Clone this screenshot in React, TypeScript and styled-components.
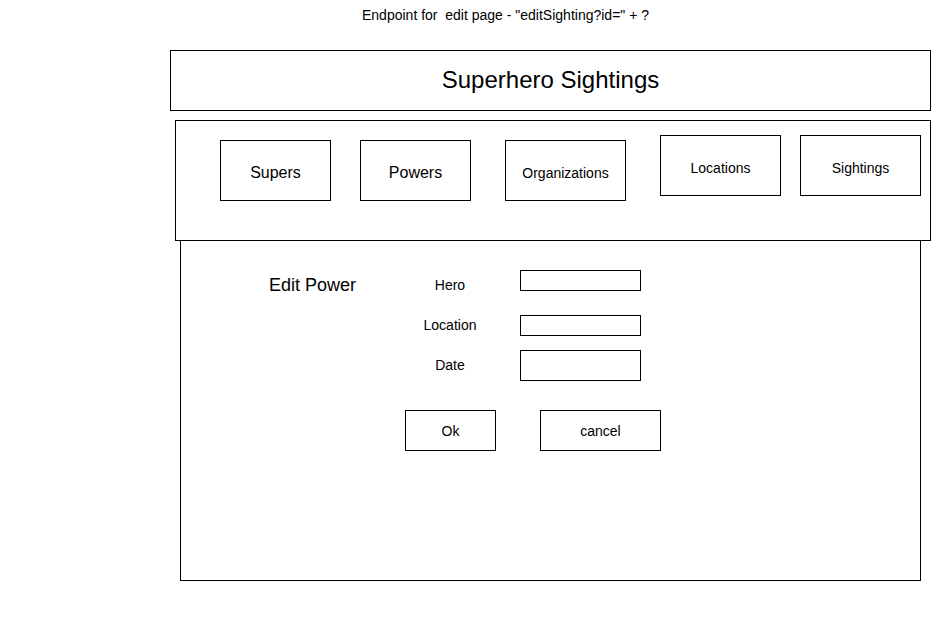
import React from "react";
import styled, { createGlobalStyle } from "styled-components";

const GlobalStyle = createGlobalStyle`
  html, body {
    margin: 0;
    padding: 0;
    background: #ffffff;
  }
  body {
    font-family: "Liberation Sans", Arial, Helvetica, sans-serif;
    color: #000000;
  }
  * { box-sizing: border-box; }
`;

const Canvas = styled.div`
  width: 931px;
  height: 623px;
  display: flex;
  flex-direction: column;
  align-items: flex-start;
  overflow: hidden;
  background: #ffffff;
`;

const Caption = styled.div`
  margin: 7px 0 0 362px;
  font-size: 14px;
  line-height: 16px;
  white-space: pre;
`;

const HeaderBox = styled.header`
  margin: 27px 0 0 170px;
  width: 761px;
  height: 61px;
  border: 1px solid #000;
  display: flex;
  align-items: center;
  justify-content: center;
  font-size: 24px;
  line-height: 28px;
  padding-bottom: 1px;
`;

const NavBar = styled.nav`
  margin: 9px 0 0 175px;
  width: 756px;
  height: 121px;
  border: 1px solid #000;
  display: flex;
  align-items: flex-start;
  padding-top: 14px;
`;

const NavButton = styled.div<{ $width: number; $gap: number; $drop: number; $size: number }>`
  width: ${(p) => p.$width}px;
  height: 61px;
  margin-left: ${(p) => p.$gap}px;
  margin-top: ${(p) => p.$drop}px;
  border: 1px solid #000;
  display: flex;
  align-items: center;
  justify-content: center;
  padding-top: 5px;
  font-size: ${(p) => p.$size}px;
  line-height: 18px;
`;

const ContentPanel = styled.main`
  margin-left: 180px;
  width: 741px;
  height: 340px;
  border: 1px solid #000;
  border-top: none;
  display: flex;
  align-items: flex-start;
`;

const Title = styled.h2`
  margin: 34px 0 0 88px;
  width: 131px;
  font-size: 18px;
  line-height: 20px;
  font-weight: normal;
`;

const FormColumn = styled.div`
  margin-top: 29px;
  display: flex;
  flex-direction: column;
  align-items: flex-start;
`;

const FieldRow = styled.div<{ $before: number; $height: number }>`
  display: flex;
  align-items: flex-start;
  gap: 20px;
  height: ${(p) => p.$height}px;
  margin-top: ${(p) => p.$before}px;
`;

const FieldLabel = styled.label<{ $offset: number }>`
  width: 100px;
  text-align: center;
  font-size: 14px;
  line-height: 16px;
  margin-top: ${(p) => p.$offset}px;
`;

const FieldInput = styled.input<{ $height: number }>`
  width: 121px;
  height: ${(p) => p.$height}px;
  border: 1px solid #000;
  border-radius: 0;
  padding: 0 4px;
  margin: 0;
  background: #fff;
  font-family: inherit;
  font-size: 14px;
  outline: none;
`;

const ButtonRow = styled.div`
  margin: 29px 0 0 5px;
  display: flex;
  gap: 44px;
`;

const ActionButton = styled.button<{ $width: number }>`
  width: ${(p) => p.$width}px;
  height: 41px;
  border: 1px solid #000;
  border-radius: 0;
  background: #fff;
  color: #000;
  padding: 0;
  font-family: inherit;
  font-size: 14px;
  line-height: 16px;
  cursor: pointer;
`;

const navItems = [
  { label: "Supers", width: 111, gap: 44, drop: 5, size: 16 },
  { label: "Powers", width: 111, gap: 29, drop: 5, size: 16 },
  { label: "Organizations", width: 121, gap: 34, drop: 5, size: 14 },
  { label: "Locations", width: 121, gap: 34, drop: 0, size: 14 },
  { label: "Sightings", width: 121, gap: 19, drop: 0, size: 14 },
];

const fields = [
  { label: "Hero", before: 0, offset: 7, height: 21 },
  { label: "Location", before: 24, offset: 2, height: 21 },
  { label: "Date", before: 14, offset: 7, height: 31 },
];

export default function App() {
  return (
    <>
      <GlobalStyle />
      <Canvas>
        <Caption>{'Endpoint for  edit page - "editSighting?id=" + ?'}</Caption>
        <HeaderBox>Superhero Sightings</HeaderBox>
        <NavBar>
          {navItems.map((n) => (
            <NavButton key={n.label} $width={n.width} $gap={n.gap} $drop={n.drop} $size={n.size}>
              {n.label}
            </NavButton>
          ))}
        </NavBar>
        <ContentPanel>
          <Title>Edit Power</Title>
          <FormColumn>
            {fields.map((f) => (
              <FieldRow key={f.label} $before={f.before} $height={f.height}>
                <FieldLabel $offset={f.offset}>{f.label}</FieldLabel>
                <FieldInput $height={f.height} readOnly />
              </FieldRow>
            ))}
            <ButtonRow>
              <ActionButton $width={91}>Ok</ActionButton>
              <ActionButton $width={121}>cancel</ActionButton>
            </ButtonRow>
          </FormColumn>
        </ContentPanel>
      </Canvas>
    </>
  );
}
